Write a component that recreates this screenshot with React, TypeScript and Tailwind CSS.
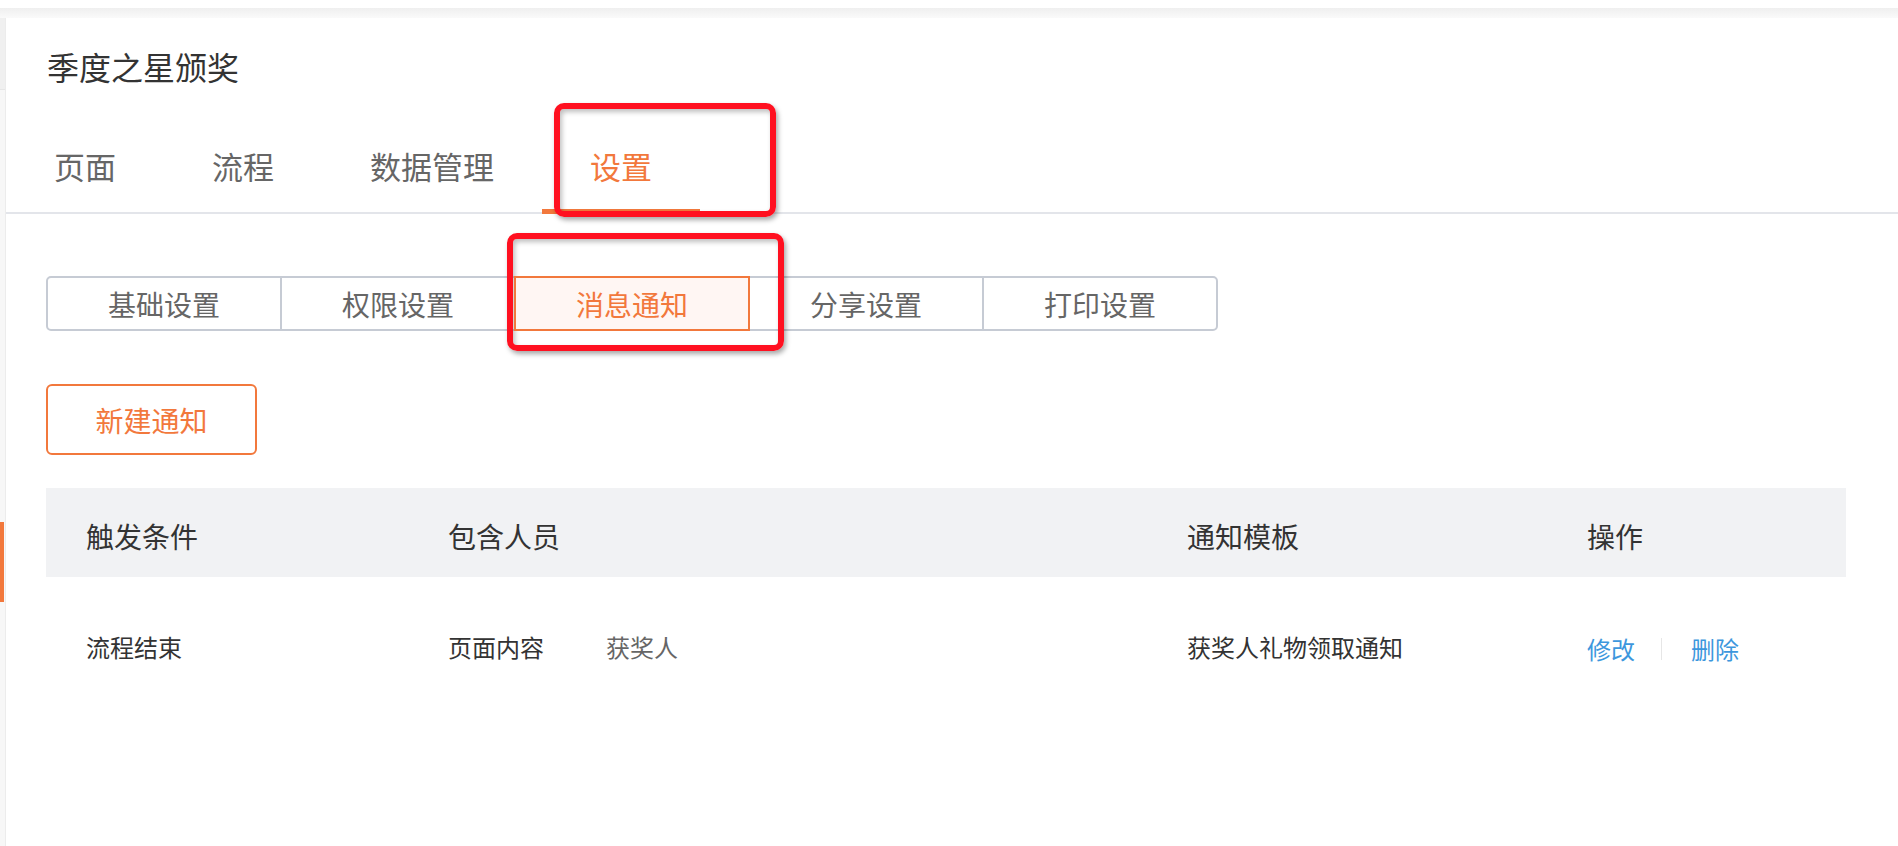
import React from "react";

const segments = ["基础设置", "权限设置", "消息通知", "分享设置", "打印设置"];
const tabs = ["页面", "流程", "数据管理", "设置"];

export default function App() {
  return (
    <div className="relative w-full h-[846px] overflow-hidden bg-white font-['Noto_Sans_CJK_SC','Noto_Sans',sans-serif]">
      {/* top shadow strip */}
      <div className="h-[8px] bg-white" />
      <div className="h-[10px] bg-gradient-to-b from-[#efefef] to-[#fafafa]" />

      <div className="flex h-[828px]">
        {/* left sidebar edge */}
        <div className="w-[6px] flex flex-col bg-[#f7f7f7] border-r border-[#ececec]">
          <div className="h-[72px] bg-[#f0f0f0] border-b border-[#e6e6e6]" />
          <div className="h-[432px]" />
          <div className="h-[80px] w-[4px] bg-[#f2783c]" />
        </div>

        <div className="flex-1 flex flex-col">
          <div className="pl-[41px] pt-[26px] h-[70px] text-[32px] leading-[44px] text-[#333]">季度之星颁奖</div>

          {/* main tabs */}
          <div className="mt-[32px] flex border-b-2 border-[#e3e5ea]">
            {tabs.map((t, i) => (
              <div
                key={t}
                className={
                  "relative h-[92px] px-12 flex items-center text-[31px] " +
                  (i === 3 ? "text-[#f2783c]" : "text-[#666]")
                }
              >
                {t}
                {i === 3 && <span className="absolute left-0 right-0 bottom-[-2px] h-[5px] bg-[#f2783c]" />}
              </div>
            ))}
          </div>

          {/* sub segments */}
          <div className="mt-[62px] ml-[40px] flex">
            {segments.map((s, i) => (
              <div
                key={s}
                className={
                  "w-[236px] h-[55px] flex items-center justify-center text-[28px] border-2 " +
                  (i > 0 ? "-ml-[2px] " : "rounded-l-[5px] ") +
                  (i === segments.length - 1 ? "rounded-r-[5px] " : "") +
                  (i === 2
                    ? "relative z-10 border-[#f2783c] bg-[#fff6f3] text-[#f2783c]"
                    : "border-[#c6cbd4] text-[#666]")
                }
              >
                {s}
              </div>
            ))}
          </div>

          <button className="mt-[53px] ml-[40px] w-[211px] h-[71px] border-2 border-[#f2783c] rounded-[6px] text-[28px] text-[#f2783c] bg-white">
            新建通知
          </button>

          {/* table */}
          <div className="mt-[33px] ml-[40px] w-[1800px]">
            <div className="grid grid-cols-[362px_739px_400px_299px] h-[89px] bg-[#f1f2f4] items-center text-[28px] text-[#333] pt-[6px]">
              <div className="pl-[40px]">触发条件</div>
              <div className="pl-[40px]">包含人员</div>
              <div className="pl-[40px]">通知模板</div>
              <div className="pl-[40px]">操作</div>
            </div>
            <div className="grid grid-cols-[362px_739px_400px_299px] h-[140px] items-center text-[24px] text-[#333]">
              <div className="pl-[40px]">流程结束</div>
              <div className="pl-[40px] flex gap-[62px]">
                <span>页面内容</span>
                <span className="text-[#666]">获奖人</span>
              </div>
              <div className="pl-[40px]">获奖人礼物领取通知</div>
              <div className="pl-[40px] flex items-center mt-[4px] text-[#3d97dd]">
                <span>修改</span>
                <span className="ml-[26px] mr-[29px] w-px h-[22px] bg-[#e6e6e6]" />
                <span>删除</span>
              </div>
            </div>
          </div>
        </div>
      </div>

      {/* red annotation boxes */}
      <div className="absolute left-[554px] top-[103px] w-[222px] h-[114px] border-[6px] border-[#ff1020] rounded-[10px] shadow-[2px_3px_5px_rgba(0,0,0,0.35),inset_2px_3px_5px_rgba(0,0,0,0.25)]" />
      <div className="absolute left-[507px] top-[233px] w-[277px] h-[118px] border-[6px] border-[#ff1020] rounded-[10px] shadow-[2px_3px_5px_rgba(0,0,0,0.35),inset_2px_3px_5px_rgba(0,0,0,0.25)]" />
    </div>
  );
}
